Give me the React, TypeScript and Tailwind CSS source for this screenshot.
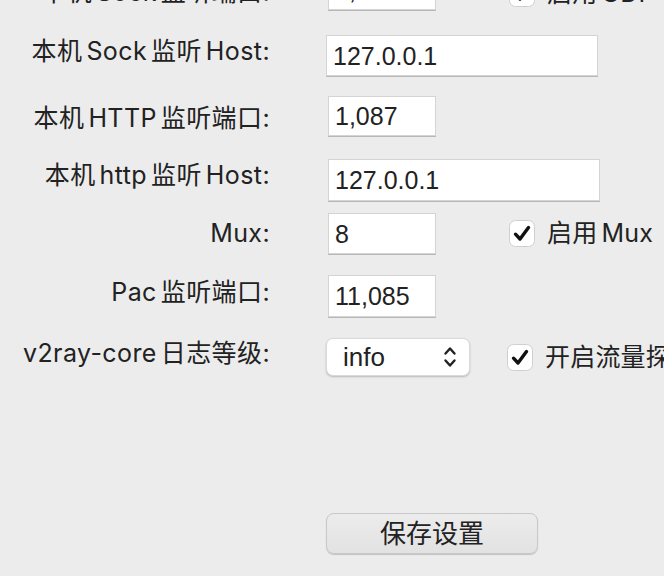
import React from 'react';

const labelFont = 'Inter, "Noto Sans CJK SC", "Noto Sans", sans-serif';
const fieldFont = '"Liberation Sans", Arial, "Noto Sans CJK SC", sans-serif';

// Latin words sit between CJK glyphs with a small gap, as macOS draws them
const W = ({ children, left = true, right = true }: { children: React.ReactNode; left?: boolean; right?: boolean }) => (
  <span className={`${left ? 'ml-[4px]' : ''} ${right ? 'mr-[4px]' : ''}`}>{children}</span>
);

const TextField = ({ value, width }: { value: string; width: string }) => (
  <div
    className={`${width} h-full bg-white border border-[#d4d4d4] shadow-[0_1px_0_#b8b8b8] flex items-center pl-[6px] pt-[2px] text-[25px] text-[#222]`}
    style={{ fontFamily: fieldFont }}
  >
    {value}
  </div>
);

const CheckMark = () => (
  <svg width="26" height="27" viewBox="0 0 26 27" className="shrink-0">
    <rect x="0.5" y="0.5" width="25" height="26" rx="6" fill="#fff" stroke="#cfcfcf" />
    <path d="M6.5 14.2 L11 19 L19.5 7.5" fill="none" stroke="#111" strokeWidth="3.4" strokeLinecap="round" strokeLinejoin="round" />
  </svg>
);

const Check = ({ label, shift = '' }: { label: React.ReactNode; shift?: string }) => (
  <div className={`flex items-center gap-[12px] whitespace-nowrap ${shift}`}>
    <CheckMark />
    <span className="text-[25px] tracking-[0.2px] text-[#222] leading-none" style={{ fontFamily: labelFont }}>
      {label}
    </span>
  </div>
);

interface RowProps {
  label: React.ReactNode;
  labelShift: string;
  mt: string;
  h: string;
  fieldOffset: string;
  field: React.ReactNode;
  check?: React.ReactNode;
}

const Row = ({ label, labelShift, mt, h, fieldOffset, field, check }: RowProps) => (
  <div className={`flex items-center ${mt} ${h}`}>
    <div
      className={`w-[270px] shrink-0 text-right text-[25px] tracking-[0.4px] leading-none text-[#222] whitespace-nowrap ${labelShift}`}
      style={{ fontFamily: labelFont }}
    >
      {label}
    </div>
    <div className={`h-full shrink-0 ${fieldOffset} ${check ? 'w-[181px]' : ''}`}>{field}</div>
    {check}
  </div>
);

const Chevrons = () => (
  <svg width="14" height="24" viewBox="0 0 14 24">
    <path d="M2.5 8.5 L7 3.5 L11.5 8.5" fill="none" stroke="#222" strokeWidth="2.4" strokeLinecap="round" strokeLinejoin="round" />
    <path d="M2.5 15.5 L7 20.5 L11.5 15.5" fill="none" stroke="#222" strokeWidth="2.4" strokeLinecap="round" strokeLinejoin="round" />
  </svg>
);

const Select = ({ value }: { value: string }) => (
  <div
    className="w-[144px] h-full bg-white rounded-[7px] border border-[#dadada] shadow-[0_1px_2px_rgba(0,0,0,0.22)] flex items-center justify-between pl-[16px] pr-[12px] text-[26px] text-[#222]"
    style={{ fontFamily: fieldFont }}
  >
    <span>{value}</span>
    <Chevrons />
  </div>
);

export default function App() {
  return (
    <div className="w-[664px] h-[576px] overflow-hidden bg-[#ececec] select-none">
      <div className="flex flex-col">
        <Row
          mt="mt-[-31px]"
          h="h-[41px]"
          labelShift="pt-[6px]"
          fieldOffset="ml-[58px]"
          label={<>本机<W>Sock</W>监听端口:</>}
          field={<TextField value="1,086" width="w-[108px]" />}
          check={<Check shift="pt-[8px]" label={<>启用<W right={false}>UDP</W></>} />}
        />
        <Row
          mt="mt-[25px]"
          h="h-[41px]"
          labelShift="pb-[8px]"
          fieldOffset="ml-[56px]"
          label={<>本机<W>Sock</W>监听<W right={false}>Host:</W></>}
          field={<TextField value="127.0.0.1" width="w-[272px]" />}
        />
        <Row
          mt="mt-[20px]"
          h="h-[40px]"
          labelShift="pt-[4px]"
          fieldOffset="ml-[58px]"
          label={<>本机<W>HTTP</W>监听端口:</>}
          field={<TextField value="1,087" width="w-[108px]" />}
        />
        <Row
          mt="mt-[23px]"
          h="h-[42px]"
          labelShift="pb-[10px]"
          fieldOffset="ml-[58px]"
          label={<>本机<W>http</W>监听<W right={false}>Host:</W></>}
          field={<TextField value="127.0.0.1" width="w-[272px]" />}
        />
        <Row
          mt="mt-[12px]"
          h="h-[41px]"
          labelShift="pb-[0px]"
          fieldOffset="ml-[58px]"
          label="Mux:"
          field={<TextField value="8" width="w-[108px]" />}
          check={<Check label={<>启用<W right={false}>Mux</W></>} />}
        />
        <Row
          mt="mt-[21px]"
          h="h-[42px]"
          labelShift="pb-[8px]"
          fieldOffset="ml-[58px]"
          label={<><W left={false}>Pac</W>监听端口:</>}
          field={<TextField value="11,085" width="w-[108px]" />}
        />
        <Row
          mt="mt-[21px]"
          h="h-[38px]"
          labelShift="pb-[8px]"
          fieldOffset="ml-[56px]"
          label={<><W left={false}>v2ray-core</W>日志等级:</>}
          field={<Select value="info" />}
          check={<Check label="开启流量探测" />}
        />
        <div className="mt-[137px] h-[41px] flex">
          <button
            className="ml-[326px] w-[212px] h-full rounded-[8px] border border-[#c8c8c8] bg-gradient-to-b from-[#ececec] to-[#e2e2e2] shadow-[0_1px_1px_rgba(0,0,0,0.18)] text-[26px] text-[#222] leading-none"
            style={{ fontFamily: labelFont }}
          >
            保存设置
          </button>
        </div>
      </div>
    </div>
  );
}
